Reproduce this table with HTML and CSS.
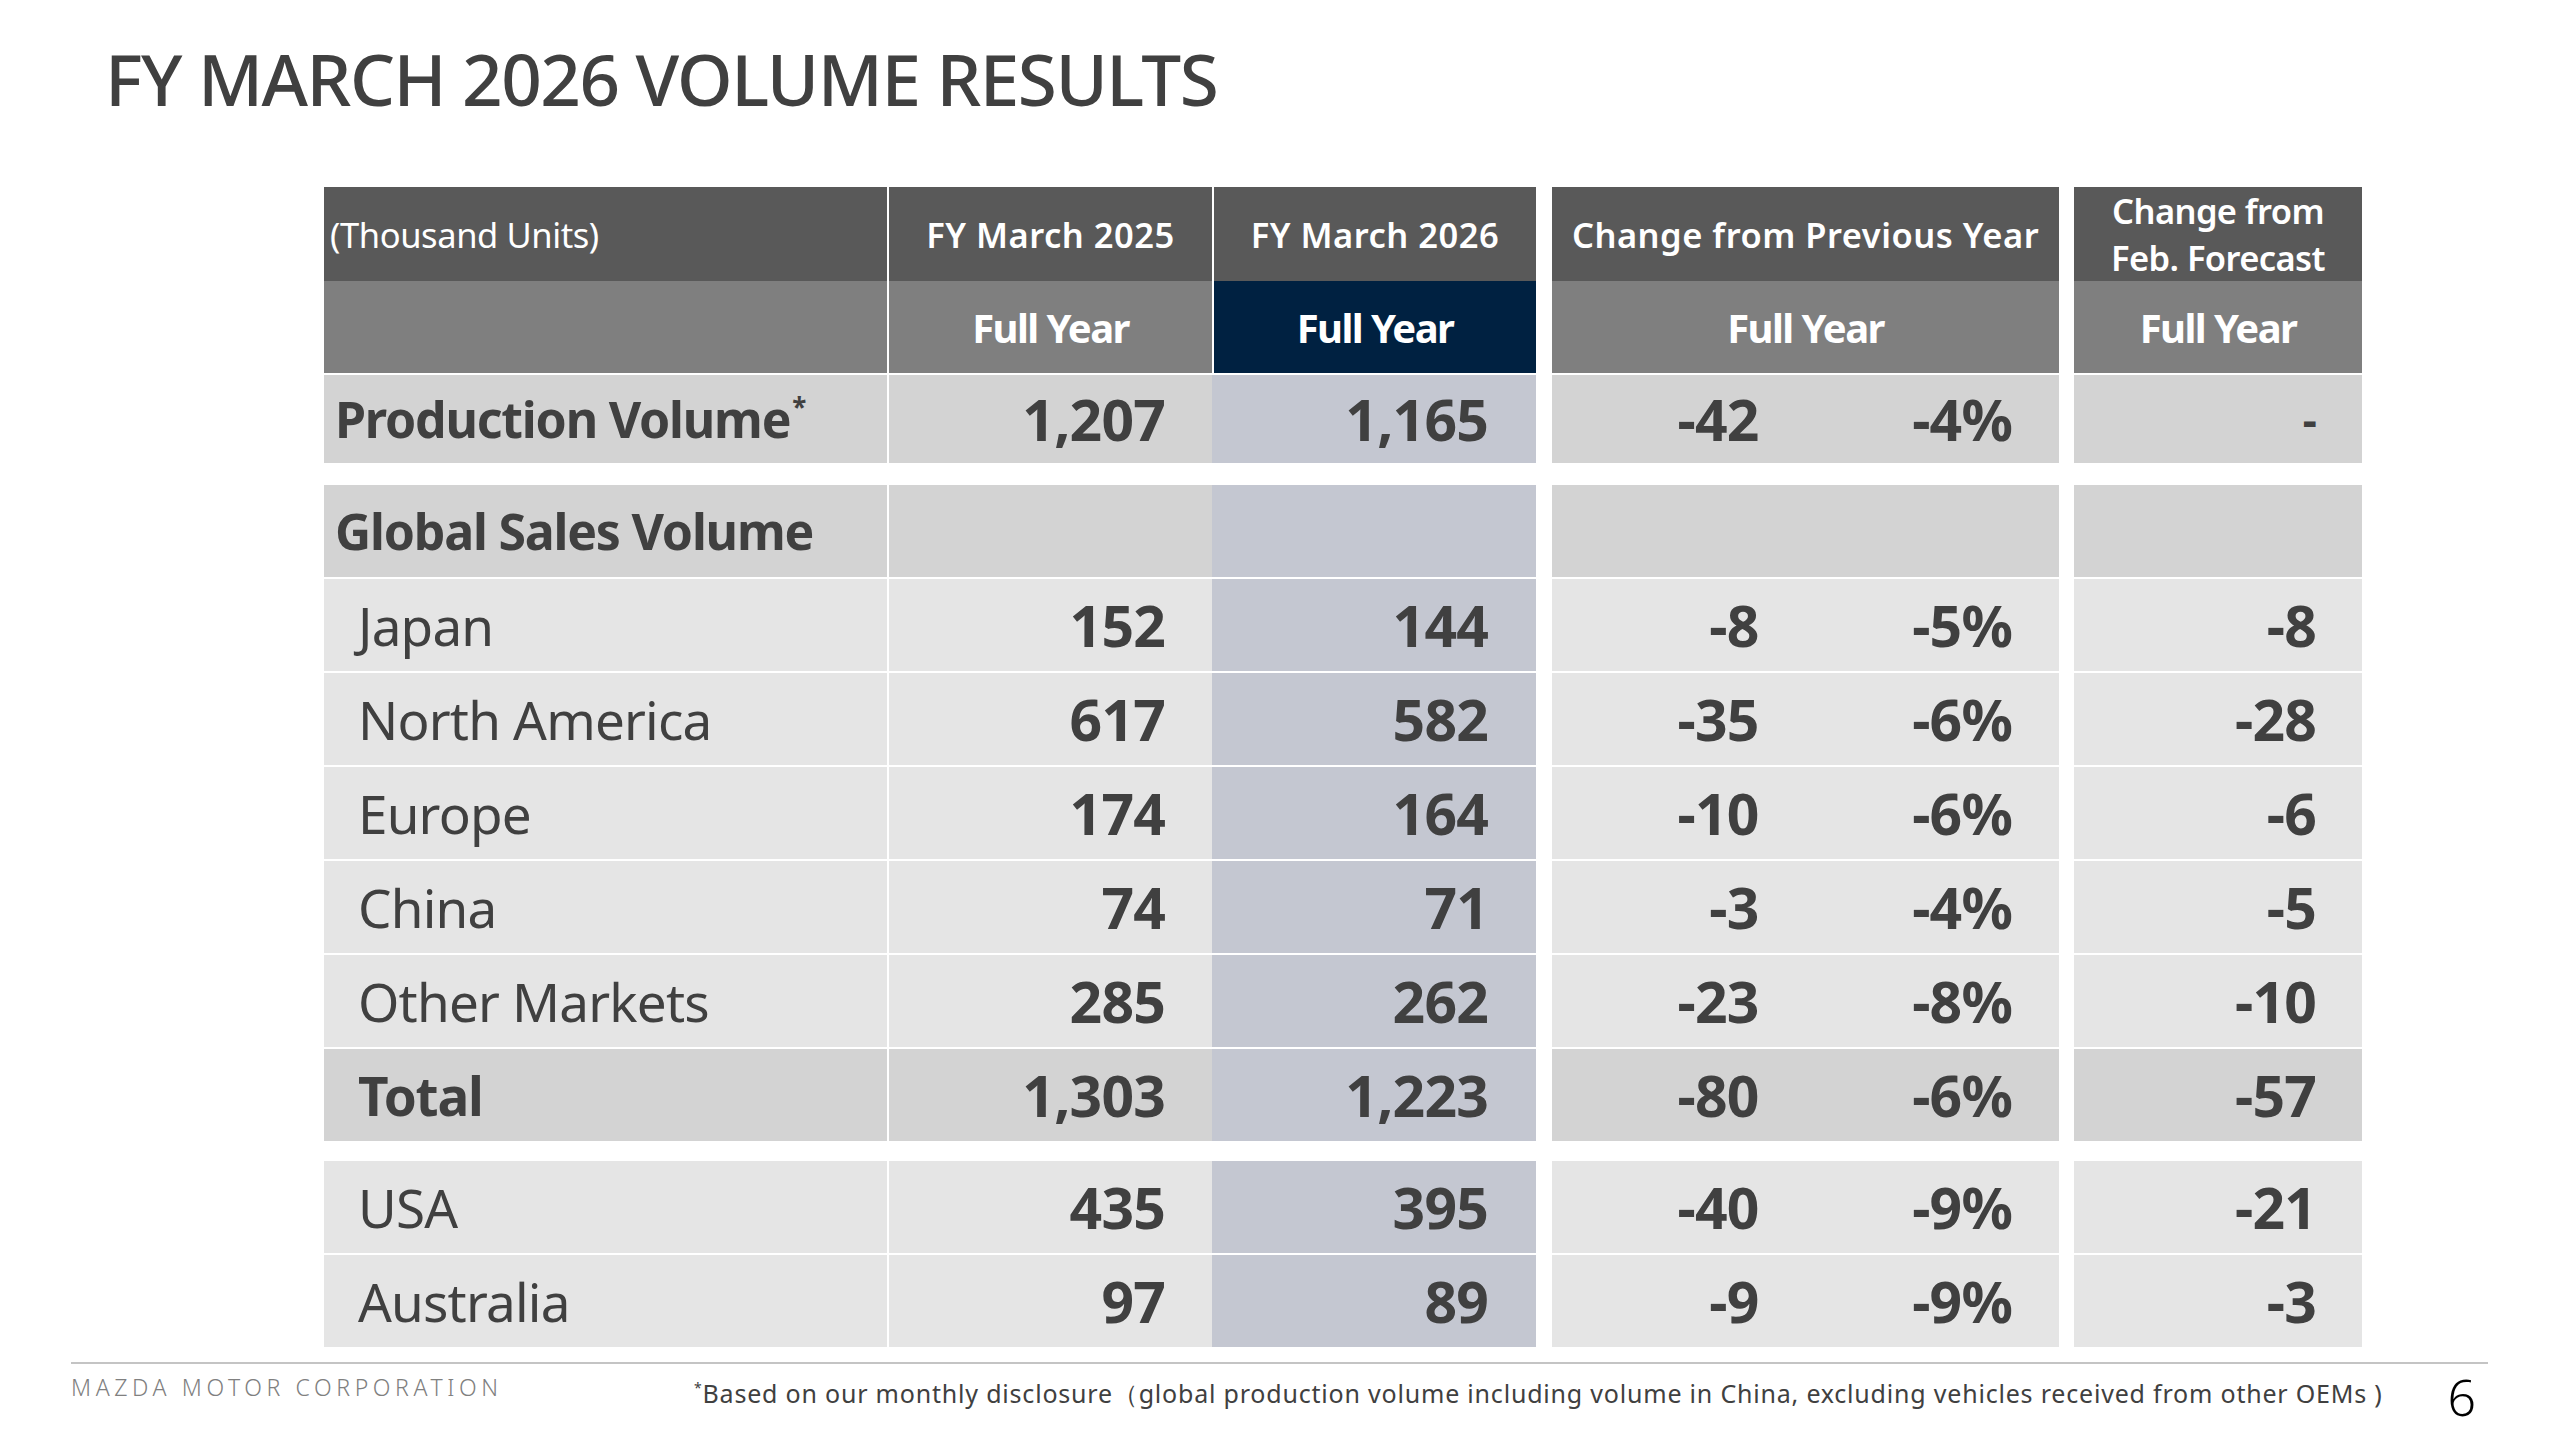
FILE: index.html
```html
<!DOCTYPE html>
<html lang="en">
<head>
    <meta charset="UTF-8">
    <title>FY March 2026 Volume Results</title>
    <link rel="stylesheet" href="styles.css">
</head>
<body>
    <div class="slide">
        <h1 class="slide-title">FY MARCH 2026 VOLUME RESULTS</h1>

        <!-- volume table -->
        <div class="vol-table">
            <div class="row head-1">
                <div class="cell c-label">(Thousand Units)</div>
                <div class="cell c-fy25">FY March 2025</div>
                <div class="cell c-fy26">FY March 2026</div>
                <div class="cell c-chg">Change from Previous Year</div>
                <div class="cell c-fc">Change from<br>Feb. Forecast</div>
            </div>
            <div class="row head-2">
                <div class="cell c-label"></div>
                <div class="cell c-fy25">Full Year</div>
                <div class="cell c-fy26">Full Year</div>
                <div class="cell c-chg">Full Year</div>
                <div class="cell c-fc">Full Year</div>
            </div>
            <div class="row data strong prod">
                <div class="cell c-label">Production Volume<sup>*</sup></div>
                <div class="cell c-fy25">1,207</div>
                <div class="cell c-fy26">1,165</div>
                <div class="cell c-chg"><span>-42</span><span>-4%</span></div>
                <div class="cell c-fc dash">-</div>
            </div>

            <div class="row data strong group-start global">
                <div class="cell c-label">Global Sales Volume</div>
                <div class="cell c-fy25"></div>
                <div class="cell c-fy26"></div>
                <div class="cell c-chg"></div>
                <div class="cell c-fc"></div>
            </div>
            <div class="row data">
                <div class="cell c-label">Japan</div>
                <div class="cell c-fy25">152</div>
                <div class="cell c-fy26">144</div>
                <div class="cell c-chg"><span>-8</span><span>-5%</span></div>
                <div class="cell c-fc">-8</div>
            </div>
            <div class="row data">
                <div class="cell c-label">North America</div>
                <div class="cell c-fy25">617</div>
                <div class="cell c-fy26">582</div>
                <div class="cell c-chg"><span>-35</span><span>-6%</span></div>
                <div class="cell c-fc">-28</div>
            </div>
            <div class="row data">
                <div class="cell c-label">Europe</div>
                <div class="cell c-fy25">174</div>
                <div class="cell c-fy26">164</div>
                <div class="cell c-chg"><span>-10</span><span>-6%</span></div>
                <div class="cell c-fc">-6</div>
            </div>
            <div class="row data">
                <div class="cell c-label">China</div>
                <div class="cell c-fy25">74</div>
                <div class="cell c-fy26">71</div>
                <div class="cell c-chg"><span>-3</span><span>-4%</span></div>
                <div class="cell c-fc">-5</div>
            </div>
            <div class="row data">
                <div class="cell c-label">Other Markets</div>
                <div class="cell c-fy25">285</div>
                <div class="cell c-fy26">262</div>
                <div class="cell c-chg"><span>-23</span><span>-8%</span></div>
                <div class="cell c-fc">-10</div>
            </div>
            <div class="row data strong total">
                <div class="cell c-label">Total</div>
                <div class="cell c-fy25">1,303</div>
                <div class="cell c-fy26">1,223</div>
                <div class="cell c-chg"><span>-80</span><span>-6%</span></div>
                <div class="cell c-fc">-57</div>
            </div>

            <div class="row data group-start-sm">
                <div class="cell c-label">USA</div>
                <div class="cell c-fy25">435</div>
                <div class="cell c-fy26">395</div>
                <div class="cell c-chg"><span>-40</span><span>-9%</span></div>
                <div class="cell c-fc">-21</div>
            </div>
            <div class="row data">
                <div class="cell c-label">Australia</div>
                <div class="cell c-fy25">97</div>
                <div class="cell c-fy26">89</div>
                <div class="cell c-chg"><span>-9</span><span>-9%</span></div>
                <div class="cell c-fc">-3</div>
            </div>
        </div>

        <!-- footer -->
        <div class="slide-footer">
            <div class="brand">MAZDA MOTOR CORPORATION</div>
            <div class="footnote"><sup>*</sup>Based on our monthly disclosure（global production volume including volume in China, excluding vehicles received from other OEMs )</div>
            <div class="page-no">6</div>
        </div>
    </div>
</body>
</html>
```

FILE: styles.css
```css
/* slide colours */
:root {
    --ink: #404040;
    --head-dark: #595959;
    --head-mid: #7f7f7f;
    --navy: #002141;
    --row-light: #e5e5e5;
    --row-mid: #d3d3d3;
    --fy26-tint: #c4c7d1;
}

body {
    margin: 0;
    background: #fff;
    font-family: "Noto Sans", "Open Sans", sans-serif;
    color: var(--ink);
}

.slide {
    width: 2560px;
    height: 1439px;
    overflow: hidden;
}

.slide-title {
    margin: 43px 0 0 105px;
    font-size: 71px;
    line-height: 1;
    font-weight: 500;
    letter-spacing: -1.5px;
    color: var(--ink);
}

/* table */
.vol-table {
    margin: 73px 0 0 324px;
    width: 2038px;
    display: flex;
    flex-direction: column;
    gap: 2px;
}

.row {
    display: grid;
    grid-template-columns: 563px 325px 324px 523px 303px;
    height: 92px;
}

.cell {
    box-sizing: border-box;
    display: flex;
    align-items: center;
}

.c-fy25 { border-left: 2px solid #fff; }
.c-chg { border-left: 16px solid #fff; }
.c-fc { border-left: 15px solid #fff; }

/* header rows */
.head-1 .cell,
.head-2 .cell {
    justify-content: center;
    color: #fff;
    text-align: center;
}
.head-1 .cell {
    background: var(--head-dark);
    font-size: 34.5px;
    font-weight: 600;
    letter-spacing: 0.5px;
    line-height: 47px;
}
.head-1 .c-fc { letter-spacing: -0.6px; }
.head-1 .c-label {
    justify-content: flex-start;
    padding-left: 6px;
    font-weight: 400;
    letter-spacing: -0.4px;
}
.head-1 .c-fy26,
.head-2 .c-fy26 { border-left: 2px solid #fff; }

.head-2 .cell {
    background: var(--head-mid);
    font-size: 40px;
    font-weight: 700;
    letter-spacing: -1.6px;
}
.head-2 .c-fy26 { background: var(--navy); }

/* data rows */
.data .cell {
    background: var(--row-light);
    justify-content: flex-end;
    font-size: 57px;
    font-weight: 700;
    letter-spacing: -0.8px;
}
.data.strong .cell { background: var(--row-mid); }
.data .c-fy26,
.data.strong .c-fy26 { background: var(--fy26-tint); }

.data .c-label {
    justify-content: flex-start;
    padding-left: 34px;
    font-size: 53px;
    font-weight: 400;
    letter-spacing: -0.8px;
}
.data.strong .c-label {
    font-weight: 700;
    letter-spacing: -1.2px;
}
.prod .c-label,
.global .c-label {
    padding-left: 11px;
    font-size: 50px;
}
.prod .c-label { letter-spacing: -1.6px; }
.global .c-label { font-weight: 600; }
.total .c-label { padding-left: 34px; }

.c-label sup {
    font-size: 26px;
    align-self: flex-start;
    margin-top: 14px;
    margin-left: 2px;
}

.data .c-fy25 { padding-right: 47px; }
.data .c-fy26 { padding-right: 48px; }
.data .c-fc { padding-right: 46px; }
.data .c-fc.dash { font-size: 44px; font-weight: 700; padding-right: 46px; }

.data .c-chg {
    display: grid;
    grid-template-columns: 1fr 1fr;
}
.c-chg span {
    text-align: right;
    padding-right: 47px;
}

.prod { height: 88px; }
.group-start { margin-top: 20px; }
.group-start-sm { margin-top: 18px; }

/* footer */
.slide-footer {
    margin: 15px 0 0 71px;
    width: 2417px;
    border-top: 2px solid #c4c4c4;
    display: flex;
    align-items: flex-start;
}
.brand {
    width: 623px;
    padding-top: 12px;
    font-size: 23px;
    line-height: 1;
    font-weight: 300;
    letter-spacing: 4.6px;
    color: #808080;
}
.footnote {
    flex: 1;
    padding-top: 17px;
    font-size: 25px;
    line-height: 1;
    letter-spacing: 0.8px;
    color: var(--ink);
}
.footnote sup {
    font-size: 14px;
    vertical-align: 10px;
}
.page-no {
    width: 60px;
    padding-top: 8px;
    padding-right: 12px;
    text-align: right;
    font-size: 50px;
    line-height: 1;
    font-weight: 300;
    color: #000;
}
```
